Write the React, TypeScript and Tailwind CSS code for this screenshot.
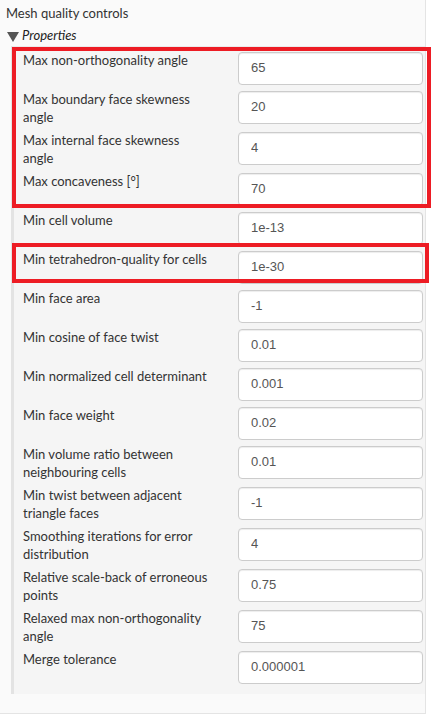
import React from "react";

const rows = [
  { label: "Max non-orthogonality angle", value: "65" },
  { label: "Max boundary face skewness angle", value: "20" },
  { label: "Max internal face skewness angle", value: "4" },
  { label: "Max concaveness [°]", value: "70" },
  { label: "Min cell volume", value: "1e-13" },
  { label: "Min tetrahedron-quality for cells", value: "1e-30" },
  { label: "Min face area", value: "-1" },
  { label: "Min cosine of face twist", value: "0.01" },
  { label: "Min normalized cell determinant", value: "0.001" },
  { label: "Min face weight", value: "0.02" },
  { label: "Min volume ratio between neighbouring cells", value: "0.01" },
  { label: "Min twist between adjacent triangle faces", value: "-1" },
  { label: "Smoothing iterations for error distribution", value: "4" },
  { label: "Relative scale-back of erroneous points", value: "0.75" },
  { label: "Relaxed max non-orthogonality angle", value: "75" },
  { label: "Merge tolerance", value: "0.000001" },
];

export default function App() {
  return (
    <div className="relative h-[725px] w-[432px] overflow-hidden bg-white font-['Lato','Open_Sans',sans-serif] text-[13px] text-[#333]">
      <div className="w-[426px] border-r border-b border-[#e4e4e4] bg-[#fafafa] pb-[19px]">
        <div className="flex h-[26px] items-center pl-[6px] leading-none">Mesh quality controls</div>
        <div className="flex h-[20px] items-center pl-[7px]">
          <svg width="12" height="10" viewBox="0 0 12 10" className="mr-[3px] mt-[2px]">
            <polygon points="0,0 12,0 6,10" fill="#555" />
          </svg>
          <span className="italic text-[#222]">Properties</span>
        </div>
        <div className="ml-[11px] border-t border-l-[3px] border-t-[#ebebeb] border-l-[#e3e3e3] bg-[#f5f5f5] pt-[2px] pb-[7px]">
          {rows.map((row) => (
            <div key={row.label} className="flex items-start py-[3px] pl-[9px] pr-[2px]">
              <div className="w-[188px] leading-[17.5px]">{row.label}</div>
              <input
                readOnly
                value={row.value}
                className="ml-auto h-[33px] w-[185px] rounded-[4px] border border-[#ccc] bg-white pl-[12px] pb-[2px] font-['Liberation_Sans',Arial,sans-serif] text-[13px] text-[#555] shadow-[inset_0_1px_1px_rgba(0,0,0,0.075)] outline-none"
              />
            </div>
          ))}
        </div>
      </div>
      <div className="pointer-events-none absolute left-[12px] top-[47px] h-[161px] w-[419px] border-4 border-[#ed1c24]" />
      <div className="pointer-events-none absolute left-[12px] top-[243px] h-[40px] w-[417px] border-4 border-[#ed1c24]" />
    </div>
  );
}
